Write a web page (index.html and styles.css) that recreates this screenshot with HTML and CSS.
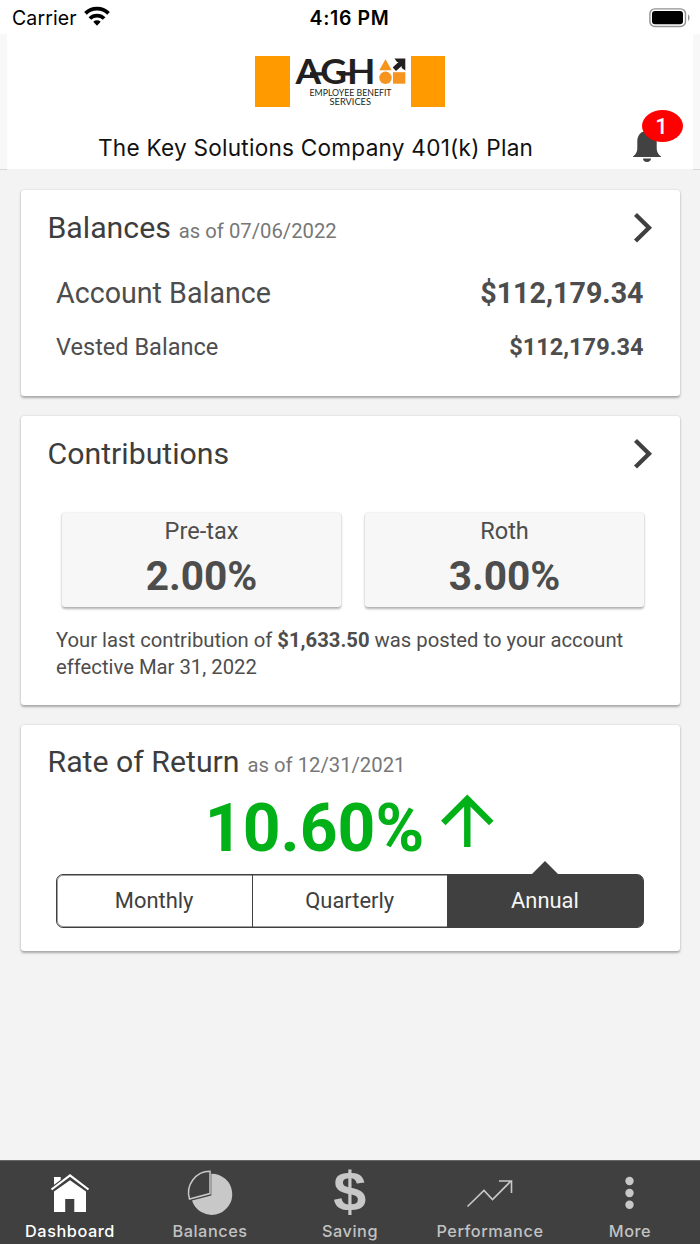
FILE: index.html
```html
<!DOCTYPE html>
<html lang="en">
<head>
<meta charset="utf-8">
<title>Dashboard</title>
<link rel="stylesheet" href="styles.css">
</head>
<body>
<div class="status">
  <div class="carrier"><span>Carrier</span>
    <svg width="26" height="20" viewBox="0 0 26 20"><g fill="none" stroke="#000" stroke-width="3.8"><path d="M1.500 7.400A16.300 16.300 0 0 1 24.500 7.400"/><path d="M5.900 12.500A10.200 10.200 0 0 1 20.100 12.500"/></g><path d="M9.300 15.700a5.500 5.500 0 0 1 7.400 0L13 19.700z"/></svg>
  </div>
  <div class="clock">4:16 PM</div>
  <svg class="battery" width="42" height="20" viewBox="0 0 42 20"><rect x=".9" y=".9" width="35.6" height="17.6" rx="5" fill="none" stroke="#929292" stroke-width="1.4"/><rect x="3" y="3.1" width="31" height="13.2" rx="3" fill="#000"/><path d="M39 6.4c2 1 2 5.4 0 6.4z" fill="#929292"/></svg>
</div>
<header class="header">
  <div class="header-inner">
    <div class="logo">
      <i class="block"></i>
      <svg class="mark" width="121" height="51" viewBox="0 0 121 51">
        <g fill="#231f20">
          <text class="agh" x="5.500" y="27.500" textLength="80" lengthAdjust="spacingAndGlyphs">AGH</text>
          <rect x="20" y="16.200" width="13" height="3.400"/>
          <rect x="49" y="16.200" width="15" height="3.400"/>
          <text class="logo-small" x="19.500" y="40.400" textLength="82" lengthAdjust="spacingAndGlyphs">EMPLOYEE BENEFIT</text>
          <text class="logo-small" x="39.500" y="49.200" textLength="41.500" lengthAdjust="spacingAndGlyphs">SERVICES</text>
          <path d="M104.500 2.500h10.800v12l-3.600-2.600v-2l-5.700 5-3.300-3.300 5.800-5.500h-1.500z"/>
        </g>
        <g fill="#f7941d"><path d="M95.500 3.200l6.200 11h-12.400z"/><circle cx="95.500" cy="21.800" r="6.200"/><rect x="103" y="16.200" width="12.300" height="11.500"/></g>
      </svg>
      <i class="block block-end"></i>
    </div>
    <div class="plan-row">
      <h1 class="plan">The Key Solutions Company 401(k) Plan</h1>
      <div class="bell">
        <svg width="30" height="34" viewBox="0 0 30 34"><path fill="#424242" d="M15 3C9 3 5.500 7 5.300 13v7c0 4-1.300 6-4.300 8.500V29h28v-.5c-3-2.500-4.300-4.500-4.300-8.500v-7C24.500 7 21 3 15 3zM11 30.500h8c0 2-1.600 3.500-4 3.500s-4-1.500-4-3.500z"/></svg>
        <span class="badge">1</span>
      </div>
    </div>
  </div>
</header>
<main class="content">
  <section class="card balances">
    <div class="card-head"><h2>Balances</h2><span class="asof">as of 07/06/2022</span>
      <svg class="chev" width="20" height="30" viewBox="0 0 20 30"><path d="M3.500 1.500L17 14.700 3.500 28" fill="none" stroke="#404040" stroke-width="4.300"/></svg></div>
    <div class="line big"><span class="lbl">Account Balance</span><b>$112,179.34</b></div>
    <div class="line small"><span class="lbl">Vested Balance</span><b>$112,179.34</b></div>
  </section>
  <section class="card contributions">
    <div class="card-head"><h2>Contributions</h2>
      <svg class="chev" width="20" height="30" viewBox="0 0 20 30"><path d="M3.500 1.500L17 14.700 3.500 28" fill="none" stroke="#404040" stroke-width="4.300"/></svg></div>
    <div class="tiles">
      <div class="tile"><span>Pre-tax</span><b>2.00%</b></div>
      <div class="tile"><span>Roth</span><b>3.00%</b></div>
    </div>
    <p class="note"><span>Your last contribution of <b>$1,633.50</b> was posted to your account</span><br><span>effective Mar 31, 2022</span></p>
  </section>
  <section class="card returns">
    <div class="card-head"><h2>Rate of Return</h2><span class="asof">as of 12/31/2021</span></div>
    <div class="rate"><b>10.60%</b>
      <svg width="54" height="54" viewBox="0 0 54 54"><path d="M26.300 53V5M2.300 29l24-24 24 24" fill="none" stroke="#02b018" stroke-width="6.400"/></svg></div>
    <div class="segments">
      <button>Monthly</button><button>Quarterly</button><button class="active">Annual</button>
    </div>
  </section>
</main>
<nav class="tabs">
  <div class="tab on"><svg width="50" height="50" viewBox="0 0 50 50"><g fill="#fff"><path d="M9 24.500L25 13.200 41 24.500V45H29.300V32H20.200V45H9z"/><path d="M9 10h6.700v4.300L9 19z"/></g><path d="M6.500 22.500L25 8.600 43.500 22.500" fill="none" stroke="#404040" stroke-width="4.500"/><path d="M6.500 22.500L25 8.300 43.500 22.500" fill="none" stroke="#fff" stroke-width="2.200"/></svg><span>Dashboard</span></div>
  <div class="tab"><svg width="50" height="50" viewBox="0 0 50 50"><path fill="#c8c8c8" d="M26.300 6.700A20.600 20.600 0 1 1 7 33.500L26.300 28.500z"/><path d="M25 4.200V26.600L4.500 32A21.500 21.500 0 0 1 25 4.200z" fill="#404040" stroke="#c8c8c8" stroke-width="1.500"/></svg><span>Balances</span></div>
  <div class="tab"><svg width="50" height="50" viewBox="0 0 50 50"><text class="dollar" x="24.700" y="44" text-anchor="middle" textLength="33" lengthAdjust="spacingAndGlyphs">$</text></svg><span>Saving</span></div>
  <div class="tab"><svg width="50" height="50" viewBox="0 0 50 50"><path d="M2.500 39.500L19 23.500l8.500 9L46 14M34 14h12.500v12" fill="none" stroke="#c8c8c8" stroke-width="1.600"/></svg><span>Performance</span></div>
  <div class="tab"><svg width="50" height="50" viewBox="0 0 50 50"><g fill="#c8c8c8"><circle cx="24.500" cy="14" r="4.200"/><circle cx="24.500" cy="26" r="4.200"/><circle cx="24.500" cy="37.700" r="4.200"/></g></svg><span>More</span></div>
</nav>
</body>
</html>
```
FILE: styles.css
```css
* { box-sizing: border-box; }
body { margin: 0; height: 1244px; display: flex; flex-direction: column; background: #f3f3f3; font-family: Roboto, sans-serif; color: #4d4d4d; white-space: nowrap; overflow: hidden; }
svg { display: block; flex: none; overflow: visible; }
h1, h2, p { margin: 0; font-weight: 400; }

.status { height: 34px; flex: none; display: grid; grid-template-columns: 1fr auto 1fr; align-items: center; background: #fff; padding: 2px 9px 0 12px; font-family: Inter, sans-serif; font-size: 19.500px; color: #000; }
.carrier { display: flex; align-items: center; gap: 7px; letter-spacing: .1px; }
.carrier svg { margin-top: -4px; }
.clock { font-weight: 600; font-size: 19.500px; letter-spacing: .65px; margin-right: 4px; }
.battery { justify-self: end; margin-top: -1px; }

.header { height: 136px; flex: none; background: #f8f8f8; border-bottom: 1px solid #d8d8d8; padding: 0 7px; }
.header-inner { height: 136px; background: #fff; border-bottom: 1px solid #f3f3f3; padding-top: 22px; }
.logo { display: flex; justify-content: center; }
.block { width: 35px; height: 51px; background: #ff9a00; }
.block-end { width: 34px; }
.plan-row { display: flex; justify-content: space-between; padding: 26px 31px 0 91px; }
.plan { font: 400 22.600px/29px Inter, sans-serif; color: #111; letter-spacing: .24px; }
.bell { position: relative; margin: -5px 0 -10px; }
.badge { position: absolute; left: 10px; top: -18px; width: 41px; height: 32px; border-radius: 50%; background: #f00; color: #fff; font-size: 22px; font-weight: 500; line-height: 33px; text-align: center; padding-right: 2px; }

.content { flex: 1; display: flex; flex-direction: column; gap: 20px; padding: 19.500px 20.500px 0; }
.card { flex: none; background: #fff; border-radius: 3px; box-shadow: 0 1.500px 2.500px rgba(0,0,0,.3), 0 0 2px rgba(0,0,0,.08); padding: 20px 27.500px 0; }
.balances { height: 206px; }
.contributions { height: 289px; }
.returns { height: 226px; padding-top: 19.500px; }
.card-head { display: flex; align-items: baseline; height: 36px; }
.card-head h2 { font-size: 30.250px; line-height: 36px; color: #3d3d3d; margin-left: -.5px; }
.asof { font-size: 20.250px; margin-left: 8px; color: #777; }
.chev { margin-left: auto; align-self: center; }
.line { display: flex; justify-content: space-between; padding: 0 8.500px 0 8px; }
.big { font-size: 28.650px; line-height: 34px; margin-top: 30px; }
.small { font-size: 23.550px; line-height: 28px; margin-top: 23px; }

.tiles { display: grid; grid-template-columns: 1fr 1fr; gap: 24px; padding: 0 8px 0 14px; margin-top: 41px; }
.tile { height: 94px; background: #f7f7f7; border-radius: 3px; box-shadow: 0 1.500px 2.500px rgba(0,0,0,.3), 0 0 2px rgba(0,0,0,.08); display: flex; flex-direction: column; align-items: center; padding-top: 4px; }
.tile span { font-size: 23.550px; line-height: 28px; }
.tile b { font-size: 40.600px; line-height: 48px; margin-top: 7px; }
.note { font-size: 20.250px; line-height: 27px; padding-left: 8px; margin-top: 20px; }

.rate { display: flex; justify-content: center; align-items: flex-start; gap: 17px; color: #02b018; height: 74px; }
.rate b { font-size: 66px; line-height: 78px; margin-top: 9.500px; }
.rate svg { margin-top: 14px; }
.segments { display: grid; grid-template-columns: repeat(3, 1fr); height: 54px; margin: 19.500px 8.500px 0 8px; border: 1px solid #404040; border-radius: 7px; box-shadow: inset 0 0 0 1px rgba(64,64,64,.5); }
.segments button { border: 0; border-left: 1.500px solid #404040; background: none; font: 21.900px/50px Roboto, sans-serif; color: #404040; padding: 0 1px 0 0; position: relative; }
.segments button:first-child { border: 0; }
.segments .active { background: #404040; color: #f5f5f5; border-radius: 0 5px 5px 0; }
.active::before { content: ""; position: absolute; left: 50%; top: -14px; margin-left: -14px; border: 14px solid transparent; border-top: 0; border-bottom-color: #404040; }

.tabs { height: 84px; flex: none; background: #404040; border-top: 1px solid #666; display: grid; grid-template-columns: repeat(5, 1fr); font: 500 16.300px/20px Inter, sans-serif; color: #c2c2c2; }
.tab { display: flex; flex-direction: column; align-items: center; padding-top: 6px; gap: 4px; letter-spacing: .55px; }
.on { color: #fff; }
.dollar { font: 700 55px "Liberation Sans", sans-serif; fill: #c8c8c8; letter-spacing: 0; }
.agh { font: 700 34.800px Lato, sans-serif; }
.logo-small { font: 400 10px Lato, sans-serif; }
```
